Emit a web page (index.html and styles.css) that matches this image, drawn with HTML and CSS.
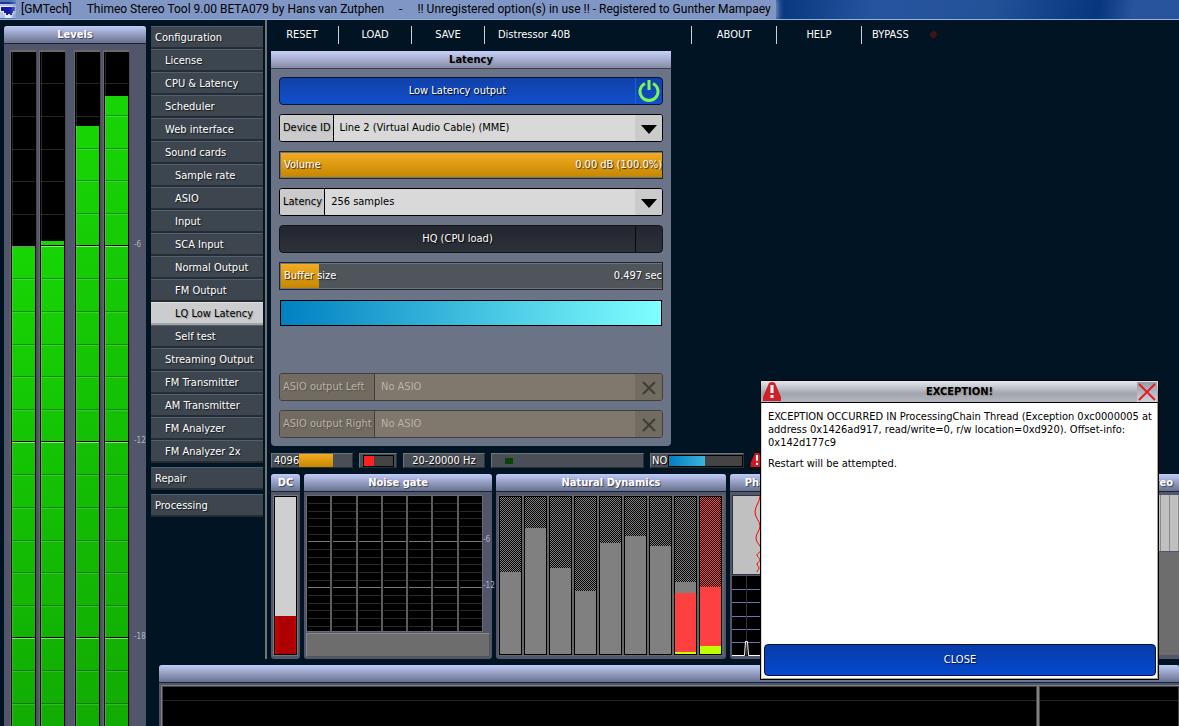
FILE: index.html
```html
<!DOCTYPE html>
<html lang="en">
<head>
  <meta charset="UTF-8">
  <title>Thimeo Stereo Tool</title>
  <link rel="stylesheet" href="styles.css">
</head>
<body>
<header class="titlebar">
  <svg class="app-icon" width="16" height="16" viewBox="0 0 16 16">
    <rect width="16" height="16" fill="#e9edfa"/>
    <rect width="16" height="2" fill="#23308f"/>
    <path d="M0 2h16v2H0z" fill="#b4c0ee"/>
    <path d="M1 5h14v4h-2v2h-1v2h-2v-1H8v1H6v-2H4V9H1z" fill="#1018a0"/>
    <path d="M0 10h3v2h2v4H0zM13 12h3v4h-4v-2z" fill="#b4c0ee"/>
  </svg>
  <div class="title">
    <span>[GMTech]</span>
    <span>Thimeo Stereo Tool 9.00 BETA079 by Hans van Zutphen</span>
    <span>-</span>
    <span>!! Unregistered option(s) in use !! - Registered to Gunther Mampaey</span>
  </div>
</header>

<div class="workspace">
  <section class="panel levels">
    <h2>Levels</h2>
    <div class="levels-body">
      <div class="pair">
        <div class="meter"><div class="fill" style="height: 71%"></div></div>
        <div class="meter"><div class="fill" style="height: 72%"></div></div>
      </div>
      <div class="pair">
        <div class="meter"><div class="fill" style="height: 89%"></div></div>
        <div class="meter"><div class="fill" style="height: 93.5%"></div></div>
      </div>
      <div class="scale"><span>-6</span><span>-12</span><span>-18</span></div>
    </div>
  </section>

  <main>
    <div class="upper">
      <nav>
        <a href="#">Configuration</a>
        <a href="#" class="sub">License</a>
        <a href="#" class="sub">CPU &amp; Latency</a>
        <a href="#" class="sub">Scheduler</a>
        <a href="#" class="sub">Web interface</a>
        <a href="#" class="sub">Sound cards</a>
        <a href="#" class="subsub">Sample rate</a>
        <a href="#" class="subsub">ASIO</a>
        <a href="#" class="subsub">Input</a>
        <a href="#" class="subsub">SCA Input</a>
        <a href="#" class="subsub">Normal Output</a>
        <a href="#" class="subsub">FM Output</a>
        <a href="#" class="subsub active">LQ Low Latency</a>
        <a href="#" class="subsub">Self test</a>
        <a href="#" class="sub">Streaming Output</a>
        <a href="#" class="sub">FM Transmitter</a>
        <a href="#" class="sub">AM Transmitter</a>
        <a href="#" class="sub">FM Analyzer</a>
        <a href="#" class="sub">FM Analyzer 2x</a>
        <a href="#" class="group">Repair</a>
        <a href="#" class="group">Processing</a>
      </nav>

      <div class="content">
        <div class="toolbar">
          <button>RESET</button>
          <button>LOAD</button>
          <button>SAVE</button>
          <button class="preset">Distressor 40B</button>
          <button class="wide">ABOUT</button>
          <button class="wide">HELP</button>
          <button class="bypass">BYPASS<i class="led"></i></button>
        </div>

        <section class="settings">
          <h2>Latency</h2>
          <div class="rows">
            <button class="toggle on">
              <span>Low Latency output</span>
              <i><svg width="22" height="22" viewBox="0 0 22 22" fill="none" stroke="#7df558" stroke-width="3"><path d="M7 3.500a9 9 0 1 0 8 0M11 0v10"/></svg></i>
            </button>
            <div class="drop">
              <label for="device">Device ID</label>
              <select id="device"><option>Line 2 (Virtual Audio Cable) (MME)</option></select>
              <i><svg width="16" height="9"><path d="M0 0h16L8 9z"/></svg></i>
            </div>
            <div class="slider">
              <input type="range" id="volume" value="100" style="--value: 100%">
              <label for="volume">Volume</label>
              <output>0.00 dB (100.0%)</output>
            </div>
            <div class="drop">
              <label for="samples">Latency</label>
              <select id="samples"><option>256 samples</option></select>
              <i><svg width="16" height="9"><path d="M0 0h16L8 9z"/></svg></i>
            </div>
            <button class="toggle">
              <span>HQ (CPU load)</span>
              <i></i>
            </button>
            <div class="slider">
              <input type="range" id="buffer" value="10" style="--value: 10%">
              <label for="buffer">Buffer size</label>
              <output>0.497 sec</output>
            </div>
            <div class="latency-bar"></div>
            <div></div>
            <div class="drop off">
              <label for="asio-left">ASIO output Left</label>
              <select id="asio-left" disabled><option>No ASIO</option></select>
              <i><svg width="14" height="14" stroke="#3f3d38" stroke-width="2"><path d="M1 1l12 12M13 1L1 13"/></svg></i>
            </div>
            <div class="drop off">
              <label for="asio-right">ASIO output Right</label>
              <select id="asio-right" disabled><option>No ASIO</option></select>
              <i><svg width="14" height="14" stroke="#3f3d38" stroke-width="2"><path d="M1 1l12 12M13 1L1 13"/></svg></i>
            </div>
          </div>
        </section>

        <div class="status">
          <div class="cell fft">4096<i></i></div>
          <div class="cell clip"><i></i></div>
          <div class="cell range">20-20000 Hz</div>
          <div class="cell signal"><i></i></div>
          <div class="cell cpu">NO<i></i></div>
          <svg width="14" height="14" viewBox="0 0 20 20"><path d="M7 0h6l6 14v6H1v-6z" fill="#d41820"/><path d="M8.500 3h3v8h-3zM8.500 14h3v3h-3z" fill="#fff"/></svg>
        </div>

        <div class="panels">
          <section class="panel dc">
            <h2>DC</h2>
            <div class="dc-meter"><div style="height: 24%"></div></div>
          </section>

          <section class="panel gate">
            <h2>Noise gate</h2>
            <div class="gate-body">
              <div class="gate-cols"><i></i><i></i><i></i><i></i><i></i><i></i><i></i></div>
              <div class="scale"><span>-6</span><span>-12</span></div>
            </div>
            <div class="gate-foot"></div>
          </section>

          <section class="panel dynamics">
            <h2>Natural Dynamics</h2>
            <div class="bars">
              <div><i style="height: 52%"></i></div>
              <div><i style="height: 80%"></i></div>
              <div><i style="height: 55%"></i></div>
              <div><i style="height: 40%"></i></div>
              <div><i style="height: 71%"></i></div>
              <div><i style="height: 75%"></i></div>
              <div><i style="height: 69%"></i></div>
              <div><i style="height: 7%"></i><i class="red" style="height: 38%"></i><i class="lime" style="height: 1%"></i></div>
              <div class="hot"><i class="red" style="height: 38%"></i><i class="lime" style="height: 5%"></i></div>
            </div>
          </section>

          <section class="panel phase">
            <h2>Phase</h2>
            <svg class="phase-plot" width="59" height="80"><path d="M27 0c0 6-5 10-5 16s5 9 5 14-4 7-4 12 5 7 5 11-4 4-4 6 3 3 3 5-3 2-3 4 2 2 2 4-2 2-2 4" fill="none" stroke="#f00"/></svg>
            <svg class="phase-scope" width="59" height="80">
              <path d="M0 13.500h59M0 26.500h59M0 40.500h59M0 53.500h59M0 66.500h59" stroke="#7472b4"/>
              <path d="M14.500 0v80" stroke="#33333b"/>
              <path d="M0 79.500h12.500l1-14h2l1 14H59" fill="none" stroke="#fff"/>
            </svg>
          </section>

          <section class="panel stereo">
            <h2>Stereo</h2>
            <div class="stereo-plot"></div>
            <div class="stereo-foot"></div>
          </section>
        </div>
      </div>
    </div>

    <section class="panel spectrum">
      <h2></h2>
      <div class="graphs">
        <div></div>
        <div></div>
      </div>
    </section>
  </main>
</div>

<div class="dialog" role="alertdialog" aria-labelledby="dialog-title">
  <div class="dialog-head">
    <svg width="20" height="20" viewBox="0 0 20 20"><path d="M7 1q3-2 6 0l6 14v4H1v-4z" fill="#cf2027"/><path d="M8.500 3h3v8h-3zM8.500 13h3v3h-3z" fill="#fff"/></svg>
    <h3 id="dialog-title">EXCEPTION!</h3>
    <button class="x" aria-label="Close"><svg width="20" height="20" fill="none" stroke="#e01e24" stroke-width="2"><path d="M2 2l16 16M18 2L2 18"/></svg></button>
  </div>
  <div class="dialog-text">
    <p>EXCEPTION OCCURRED IN ProcessingChain Thread (Exception 0xc0000005 at address 0x1426ad917, read/write=0, r/w location=0xd920). Offset-info: 0x142d177c9</p>
    <p>Restart will be attempted.</p>
  </div>
  <button class="close">CLOSE</button>
</div>
</body>
</html>
```
FILE: styles.css
```css
* {
  box-sizing: border-box;
}
body {
  margin: 0;
  height: 100vh;
  display: flex;
  flex-direction: column;
  overflow: hidden;
  background: #001424;
  color: #fff;
  font-family: "DejaVu Sans Condensed", "DejaVu Sans", sans-serif;
  font-size: 11px;
  line-height: 14px;
}
h2, h3, p {
  margin: 0;
  font-size: 11px;
}
button, select {
  font: inherit;
  color: inherit;
  border: none;
  padding: 0;
  background: none;
}
i {
  display: block;
}
svg {
  display: block;
  flex: none;
}

/* window title */
.titlebar {
  display: flex;
  align-items: center;
  flex: none;
  height: 20px;
  background: linear-gradient(100deg, #4a76b8 0, #2b5ca8 45%, #07377f 66%, #27549f 74%, #245299 84%, #07357e 93%, #27549d 96%);
  border-bottom: 1px solid #8fb4dc;
}
.title {
  display: flex;
  gap: 15px;
  padding: 0 5px;
  background: #8097c5;
  box-shadow: 0 0 6px 2px #8097c5;
  clip-path: inset(0 -10px);
  color: #000;
  font-family: Roboto, "Open Sans", sans-serif;
  font-size: 12px;
  line-height: 19px;
  white-space: nowrap;
}

.workspace {
  flex: 1;
  min-height: 0;
  display: flex;
  gap: 5px;
  padding-left: 4px;
}
main {
  flex: 1;
  min-width: 0;
  display: flex;
  flex-direction: column;
}
.panel {
  background: #51566a;
  border-radius: 3px;
}
.panel h2 {
  height: 18px;
  line-height: 17px;
  border-bottom: 1px solid #14243a;
  border-radius: 3px 3px 0 0;
  background: linear-gradient(#c0cbf8, #68718c);
  text-align: center;
  white-space: nowrap;
  text-shadow: 1px 1px 1px #3a4058;
}

/* level meters */
.levels {
  flex: none;
  width: 142px;
  margin-top: 6px;
  display: flex;
  flex-direction: column;
  border-radius: 3px 3px 0 0;
}
.levels-body {
  flex: 1;
  display: flex;
  padding: 6px 0 0 6px;
  gap: 8px;
}
.pair {
  display: flex;
  gap: 2px;
}
.meter {
  position: relative;
  width: 27px;
  display: flex;
  align-items: flex-end;
  background: #000;
  border: solid #686868;
  border-width: 2px 1px 0;
  border-right-color: #4a4a50;
  padding: 0 1px;
}
.meter .fill {
  width: 100%;
  background: linear-gradient(#17d505, #11ac03);
}
.meter::after {
  content: "";
  position: absolute;
  inset: 0 1px;
  border-left: 1px solid rgba(255, 255, 255, 0.15);
  background: repeating-linear-gradient(
    transparent 0 30px, rgba(0, 0, 0, 0.3) 30px 31px, rgba(255, 255, 255, 0.15) 31px 32px,
    transparent 32px 63px, rgba(0, 0, 0, 0.3) 63px 64px, rgba(255, 255, 255, 0.15) 64px 65px,
    transparent 65px 96px, rgba(0, 0, 0, 0.3) 96px 97px, rgba(255, 255, 255, 0.15) 97px 98px,
    transparent 98px 128px, rgba(0, 0, 0, 0.3) 128px 129px, rgba(255, 255, 255, 0.15) 129px 130px,
    transparent 130px 161px, rgba(0, 0, 0, 0.3) 161px 162px, rgba(255, 255, 255, 0.15) 162px 163px,
    transparent 163px 193px, #000 193px 194px, rgba(255, 255, 255, 0.5) 194px 195px,
    transparent 195px 196px);
}
.scale {
  display: flex;
  flex-direction: column;
  color: #b4b6c0;
  font-size: 8px;
  line-height: 8px;
}
.scale span {
  display: flex;
  align-items: flex-end;
  height: 196px;
}
.levels .scale {
  margin-left: -4px;
  padding-top: 3px;
}

/* menu */
.upper {
  display: flex;
}
nav {
  flex: none;
  width: 112px;
  padding-top: 6px;
}
nav a {
  display: block;
  height: 23px;
  padding-left: 4px;
  line-height: 22px;
  background: #3d464f;
  border: solid #4f6072;
  border-width: 1px 0 2px;
  border-bottom-color: #252c34;
  color: #fff;
  text-decoration: none;
  text-shadow: 1px 1px 1px #14181c;
  white-space: nowrap;
}
nav .sub {
  padding-left: 14px;
}
nav .subsub {
  padding-left: 24px;
}
nav .active {
  background: #cbccce;
  border-color: #e0e0e0;
  border-bottom-color: #a4a4a6;
  color: #000;
  text-shadow: 1px 1px 1px #999;
}
nav .group {
  margin-top: 4px;
}

.content {
  flex: 1;
  min-width: 0;
  margin-left: 2px;
  padding-left: 4px;
  border-left: 2px solid #747474;
}
.toolbar {
  display: flex;
  align-items: center;
  height: 31px;
  margin-left: -5px;
  text-shadow: 1px 1px 1px #000;
}
.toolbar button {
  width: 73px;
  height: 18px;
  margin-bottom: 2px;
  border-right: 1px solid #ccd2d8;
}
.toolbar .preset {
  width: 207px;
  padding-left: 13px;
  text-align: left;
}
.toolbar .wide {
  width: 85px;
}
.toolbar .bypass {
  display: flex;
  align-items: center;
  gap: 20px;
  width: auto;
  padding-left: 10px;
  border: none;
}
.led {
  width: 9px;
  height: 9px;
  border-radius: 50%;
  background: #38161a;
  border: 1px solid #100c14;
}

/* latency settings */
.settings {
  width: 400px;
  background: #6b7387;
  border-radius: 0 0 4px 4px;
}
.settings h2 {
  height: 18px;
  line-height: 17px;
  text-align: center;
  color: #000;
  background: linear-gradient(#c8d0fa, #868ca4);
  border-bottom: 1px solid #383e50;
  text-shadow: 1px 1px 1px #8890a8;
}
.rows {
  display: grid;
  grid-auto-rows: 28px;
  gap: 9px;
  padding: 8px;
}
.toggle {
  display: flex;
  border: 1px solid #111518;
  border-radius: 4px;
  background: linear-gradient(#23262e, #2d3139);
  line-height: 25px;
  text-shadow: 1px 1px 1px #000;
}
.toggle span {
  flex: 1;
}
.toggle i {
  width: 27px;
  height: 26px;
  padding: 2px;
  border-left: 1px solid #08090b;
}
.toggle.on {
  border-color: #04143c;
  background: linear-gradient(#1041a8, #114fcb);
}
.toggle.on i {
  border-color: #2460d4;
}
.drop {
  display: flex;
  border: 1px solid #000;
  border-radius: 3px;
  background: #d9d9d9;
  color: #000;
  line-height: 26px;
  text-shadow: 1px 1px 1px #aaa;
  overflow: hidden;
}
.drop label {
  padding: 0 2px 0 3px;
  background: #cbcbcb;
  border-right: 1px solid #000;
  white-space: nowrap;
}
.drop select {
  flex: 1;
  min-width: 0;
  height: 26px;
  padding-left: 6px;
  appearance: none;
  opacity: 1;
}
.drop i {
  display: grid;
  place-items: center;
  width: 27px;
  padding-top: 2px;
  background: #cbcbcb;
}
.drop.off {
  border-color: #403f3c;
  background: #80786c;
  color: #b8b3a8;
  text-shadow: 1px 1px 1px #55524b;
}
.off label, .off i {
  background: #726b61;
  border-color: #403f3c;
}
.off label {
  width: 95px;
}
.slider {
  display: grid;
  grid-template-columns: 1fr;
  align-items: center;
  border: 1px solid #222629;
  padding: 1px 0 1px 1px;
  text-shadow: 1px 1px 1px #222;
}
.slider > * {
  grid-area: 1 / 1;
}
.slider label {
  padding: 0 0 1px 3px;
  pointer-events: none;
}
.slider output {
  padding-bottom: 1px;
  text-align: right;
  pointer-events: none;
}
.slider input {
  appearance: none;
  width: 100%;
  height: 100%;
  margin: 0;
  background: linear-gradient(#f2ac22, #c68700) 0 0 / var(--value) 100% no-repeat #50555b;
}
.slider input::-webkit-slider-thumb {
  appearance: none;
  width: 1px;
}
.latency-bar {
  margin: 1px;
  border: 1px solid #000;
  background: linear-gradient(90deg, #0080c0, #80ffff);
}

/* status line */
.status {
  display: flex;
  gap: 6px;
  margin: 7px 0 6px;
  height: 15px;
}
.cell {
  display: flex;
  align-items: center;
  padding: 0 2px;
  background: #4a4f57;
  border: 1px solid #707378;
  border-right-color: #2c3036;
  border-bottom-color: #2c3036;
  text-shadow: 1px 1px 1px #000;
}
.fft {
  width: 82px;
}
.fft i {
  width: 34px;
  height: 13px;
  background: linear-gradient(#f2ac22, #c68700);
}
.clip {
  width: 38px;
}
.clip i {
  width: 34px;
  height: 12px;
  margin-left: 1px;
  border: 1px solid #000;
  background: linear-gradient(90deg, #ff2020 10px, #444 10px);
}
.range {
  width: 82px;
  justify-content: center;
}
.signal {
  width: 153px;
}
.signal i {
  width: 8px;
  height: 6px;
  margin-left: 11px;
  background: #044404;
}
.cpu {
  width: 94px;
  padding: 0 0 0 1px;
}
.cpu i {
  flex: 1;
  height: 12px;
  margin-left: 1px;
  border: 1px solid #000;
  background: linear-gradient(90deg, #0080c0, #3cb4dc 50%, #444 50%);
}

/* processing panels */
.panels {
  display: flex;
  gap: 4px;
  height: 185px;
}
.panels .panel {
  flex: none;
  display: flex;
  flex-direction: column;
}
.dc {
  width: 29px;
}
.dc-meter {
  flex: 1;
  display: flex;
  align-items: flex-end;
  margin: 3px 2px;
  border: 1px solid #777;
  outline: 1px solid #000;
  outline-offset: -2px;
  padding: 1px;
  background: #cfcfcf;
}
.dc-meter div {
  width: 100%;
  background: linear-gradient(90deg, #c80000 3px, #ae0000 3px 19px, #c80000 19px);
}
.gate {
  width: 188px;
}
.gate-body {
  display: flex;
  flex: 1;
  padding: 3px 0 0 2px;
}
.gate-cols {
  flex: none;
  display: flex;
  width: 177px;
  border: 1px solid #6c6c70;
  background: #000;
}
.gate-cols i {
  flex: 1;
  border-left: 1px solid #000;
  border-right: 2px solid #5c5c5c;
  background: repeating-linear-gradient(
    transparent 0 7px, #2a2a2a 7px 8px, transparent 8px 15px, #2a2a2a 15px 16px,
    transparent 16px 22px, #2a2a2a 22px 23px, transparent 23px 30px, #2a2a2a 30px 31px,
    transparent 31px 38px, #2a2a2a 38px 39px, transparent 39px 45px, #777 45px 46px);
}
.gate-cols i:last-child {
  border-right: none;
}
.gate .scale {
  padding-top: 3px;
}
.gate .scale span {
  height: 46px;
}
.gate-foot {
  height: 24px;
  margin: 1px 2px 2px;
  background: #6d6d6d;
  border: 1px solid #888;
  border-right-color: #555;
  border-bottom-color: #555;
}
.dynamics {
  width: 230px;
}
.bars {
  flex: 1;
  display: flex;
  gap: 2px;
  margin: 3px 2px;
  padding: 1px;
  background: #666;
}
.bars div {
  flex: none;
  width: 23px;
  display: flex;
  flex-direction: column;
  justify-content: flex-end;
  border: 1px solid #000;
  background: repeating-conic-gradient(#808080 0 25%, #000 0 50%) 0 0 / 2px 2px;
}
.bars .hot {
  background: repeating-conic-gradient(#ff4040 0 25%, #000 0 50%) 0 0 / 2px 2px;
}
.bars i {
  background: #808080;
}
.bars .red {
  background: #ff4040;
}
.bars .lime {
  background: #c0ff00;
}
.phase {
  width: 63px;
}
.phase-plot {
  margin: 3px 2px 1px;
  border: 1px solid #333;
  background: #c0c0c0;
}
.phase-scope {
  margin: 0 2px;
  background: #000;
}
.panels .stereo {
  width: 63px;
  margin: 0 -7px 0 auto;
}
.stereo-plot {
  height: 56px;
  margin: 3px 2px 1px;
  background: repeating-linear-gradient(90deg, #c0c0c0 0 8px, #8a8a8a 8px 9px);
}
.stereo-foot {
  flex: 1;
  margin: 0 2px 4px;
  background: #6d6d6d;
}

/* bottom analyser */
.spectrum {
  flex: 1;
  display: flex;
  flex-direction: column;
  margin: 6px 0 0 8px;
  border-radius: 3px 0 0 0;
}
.graphs {
  flex: 1;
  display: flex;
  gap: 2px;
  margin: 2px 0 0 2px;
  padding: 1px 0 0 1px;
  background: #808080;
}
.graphs div {
  flex: 1;
  border: 1px solid #444;
  border-bottom: none;
  background: linear-gradient(transparent 13px, #262626 13px 14px, transparent 14px) #000;
}
.graphs div:first-child {
  flex: none;
  width: 86%;
}

/* exception window */
.dialog {
  position: absolute;
  top: 380px;
  right: 20px;
  width: 399px;
  height: 300px;
  display: flex;
  flex-direction: column;
  border: 1px solid #000;
  background: #fff;
  color: #000;
  box-shadow: inset 1px 1px #d8d4cc, inset -1px -1px #a8a49c;
}
.dialog-head {
  display: flex;
  align-items: center;
  height: 22px;
  padding: 0 1px;
  background: linear-gradient(#e6e8ee, #a2a5ae 60%, #b4b6be);
  border-bottom: 1px solid #000;
}
.dialog-head h3 {
  flex: 1;
  text-align: center;
  text-shadow: 1px 1px 1px #888;
}
.x {
  width: 20px;
  height: 20px;
  background: linear-gradient(#989ca6, #d0d2d8);
}
.dialog-text {
  flex: 1;
  padding: 7px 1px 7px 7px;
  line-height: 13px;
}
.dialog-text p {
  margin-bottom: 8px;
}
.close {
  height: 32px;
  margin: 0 2px 3px 3px;
  border: 1px solid #001040;
  border-radius: 4px;
  background: linear-gradient(#083ca8, #0448d0);
  color: #fff;
  line-height: 28px;
  text-shadow: 1px 1px 1px #001040;
}
```
